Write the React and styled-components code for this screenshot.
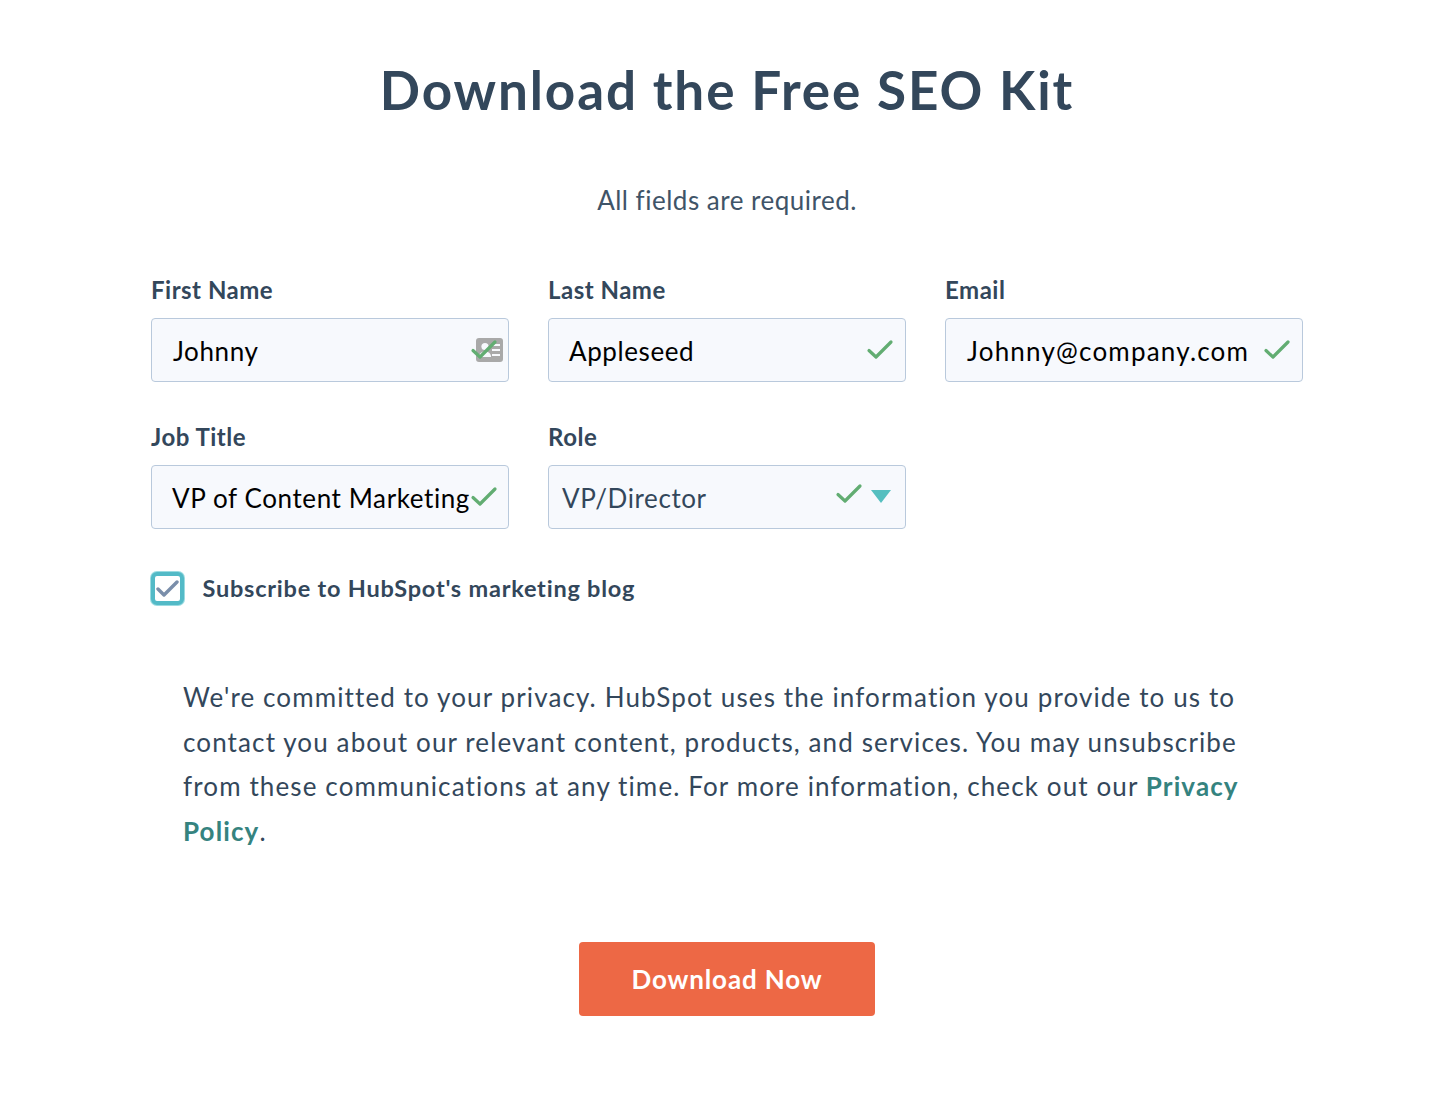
import React from "react";
import styled, { createGlobalStyle } from "styled-components";

const Global = createGlobalStyle`
  html, body { margin: 0; padding: 0; background: #fff; }
  body { font-family: "Lato", "Open Sans", sans-serif; color: #33475b; }
`;
const Page = styled.main`
  box-sizing: border-box;
  width: 1438px;
  height: 1104px;
  padding: 60px 135px 0 151px;
`;
const Title = styled.h1`
  margin: 0;
  font-size: 53px;
  line-height: 60px;
  font-weight: 700;
  letter-spacing: 1.9px;
  text-align: center;
  color: #33475b;
`;
const Note = styled.p`
  margin: 65px 0 0;
  font-size: 26px;
  line-height: 30px;
  letter-spacing: 0.5px;
  text-align: center;
  color: #3f5468;
`;
const Fields = styled.div`
  margin-top: 62px;
  display: grid;
  grid-template-columns: repeat(3, 358px);
  column-gap: 39px;
  row-gap: 42px;
`;
const Label = styled.label`
  display: block;
  font-size: 24px;
  line-height: 26px;
  font-weight: 700;
  letter-spacing: 0.5px;
  color: #33475b;
  margin-bottom: 15px;
`;
const Control = styled.div`
  position: relative;
  box-sizing: border-box;
  height: 64px;
  display: flex;
  align-items: center;
  padding: 2px 0 0 ${(p) => p.$pad}px;
  background: #f7f9fd;
  border: 1px solid #b9c9dc;
  border-radius: 4px;
  font-size: 26px;
  letter-spacing: ${(p) => p.$spacing}px;
  white-space: nowrap;
  color: ${(p) => (p.$muted ? "#33475b" : "#000")};
`;
const CheckMark = styled.svg`
  position: absolute;
  top: ${(p) => p.$top}px;
  left: ${(p) => p.$left}px;
  width: 28px;
  height: 22px;
  fill: none;
  stroke: #62ad72;
  stroke-width: 3.2;
  stroke-linecap: round;
  stroke-linejoin: round;
`;
const Badge = styled.svg`
  position: absolute;
  top: 19px;
  left: 324px;
  width: 27px;
  height: 24px;
`;
const Caret = styled.svg`
  position: absolute;
  top: 24px;
  left: 322px;
  width: 20px;
  height: 13px;
  fill: #55bfc0;
`;
const Subscribe = styled.div`
  margin-top: 41px;
  display: flex;
  align-items: center;
  gap: 18.5px;
  height: 36px;
`;
const Box = styled.span`
  box-sizing: border-box;
  flex: none;
  width: 33px;
  height: 33px;
  display: flex;
  align-items: center;
  justify-content: center;
  background: #fff;
  border: 4px solid #53bac7;
  border-radius: 6px;
  box-shadow: 0 0 0 1px #9bdbe1;
`;
const BoxTick = styled.svg`
  width: 24px;
  height: 20px;
  fill: none;
  stroke: #7a8eaa;
  stroke-width: 3.4;
  stroke-linecap: round;
  stroke-linejoin: round;
`;
const SubscribeText = styled.span`
  font-size: 23.5px;
  font-weight: 700;
  letter-spacing: 0.78px;
  color: #33475b;
`;
const Privacy = styled.p`
  margin: 69px 0 0 32px;
  width: 1075px;
  font-size: 26px;
  line-height: 44.7px;
  letter-spacing: 1.12px;
  color: #33475b;
`;
const PrivacyLink = styled.a`
  color: #35837f;
  font-weight: 700;
  text-decoration: none;
`;
const ButtonRow = styled.div`
  margin-top: 88px;
  display: flex;
  justify-content: center;
`;
const Button = styled.button`
  width: 296px;
  height: 74px;
  border: 0;
  border-radius: 4px;
  background: #ed6845;
  color: #fff;
  font-family: inherit;
  font-size: 26px;
  font-weight: 700;
  letter-spacing: 0.85px;
`;

const tick = "M3 11.5L10 18L25 3";

function Field({ label, value, pad = 21, spacing = 0.6, muted, left = 317, top = 20, badge, caret }) {
  return (
    <div>
      <Label>{label}</Label>
      <Control $pad={pad} $muted={muted} $spacing={spacing}>
        {value}
        {badge && (
          <Badge viewBox="0 0 27 24">
            <rect width="27" height="24" rx="3" fill="#a9a9a9" />
            <circle cx="9" cy="8.5" r="3.6" fill="#f7f9fd" />
            <path d="M3 19c0-4 3-5.500 6-5.500s6 1.500 6 5.500z" fill="#f7f9fd" />
            <path d="M16 7h8M16 12h8M16 17h8" stroke="#f7f9fd" strokeWidth="2" />
          </Badge>
        )}
        <CheckMark $left={left} $top={top} viewBox="0 0 28 22">
          <path d={tick} />
        </CheckMark>
        {caret && (
          <Caret viewBox="0 0 20 13">
            <path d="M0 0H20L10 13Z" />
          </Caret>
        )}
      </Control>
    </div>
  );
}

export default function App() {
  return (
    <>
      <Global />
      <Page>
        <Title>Download the Free SEO Kit</Title>
        <Note>All fields are required.</Note>
        <Fields>
          <Field label="First Name" value="Johnny" left={318} badge />
          <Field label="Last Name" value="Appleseed" pad={20} />
          <Field label="Email" value="Johnny@company.com" spacing={1.2} />
          <Field label="Job Title" value="VP of Content Marketing" pad={20} left={318} />
          <Field label="Role" value="VP/Director" pad={13} muted left={286} top={17} caret />
        </Fields>
        <Subscribe>
          <Box>
            <BoxTick viewBox="0 0 24 20">
              <path d="M2 11L8 17L21 4" />
            </BoxTick>
          </Box>
          <SubscribeText>Subscribe to HubSpot's marketing blog</SubscribeText>
        </Subscribe>
        <Privacy>
          We're committed to your privacy. HubSpot uses the information you provide to us to contact you about our relevant content, products, and services. You may unsubscribe from these communications at any time. For more information, check out our{" "}
          <PrivacyLink href="#">Privacy Policy</PrivacyLink>.
        </Privacy>
        <ButtonRow>
          <Button>Download Now</Button>
        </ButtonRow>
      </Page>
    </>
  );
}
